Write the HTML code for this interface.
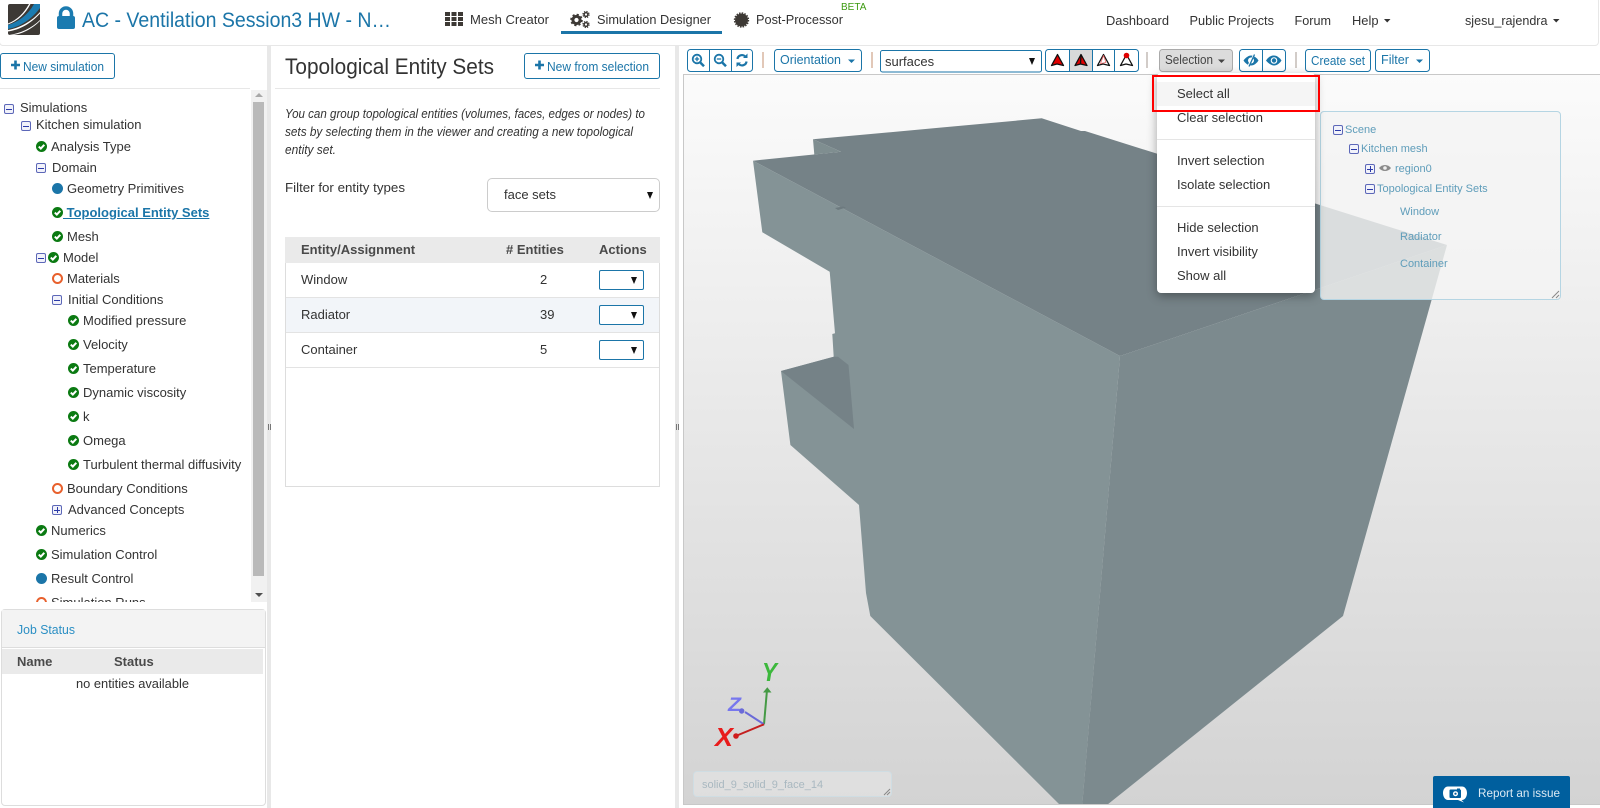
<!DOCTYPE html>
<html lang="en"><head><meta charset="utf-8"><title>Topological Entity Sets</title>
<style>
html,body{margin:0;padding:0;background:#fff;width:1600px;height:808px;overflow:hidden}
body{position:relative;font:13px/16px "Liberation Sans",sans-serif;color:#333}
.a,.t,.m,.p,.b{position:absolute}
.t{white-space:nowrap}
.m,.p{width:8px;height:8px;border:1px solid #5c67b8;border-radius:2px;background:#f1f2fa}
.m:after,.p:after{content:"";position:absolute;left:1px;top:3.500px;width:6px;height:1px;background:#2b3aa8}
.p:before{content:"";position:absolute;left:3.500px;top:1px;width:1px;height:6px;background:#2b3aa8}
.b{box-sizing:border-box;border:1px solid #1b75a8;border-radius:3px;background:#fff}
.sel{position:absolute;box-sizing:border-box;width:45px;height:20px;left:599px;border:1px solid #1b75a8;border-radius:2px;background:#fff}
.arr{position:absolute;width:0;height:0;border-left:3.500px solid transparent;border-right:3.500px solid transparent;border-top:7px solid #111}
.dr{position:absolute;left:1177px;color:#333;white-space:nowrap}
.sp{position:absolute;left:1157px;width:158px;height:1px;background:#e5e5e5}
.sc{position:absolute;color:#5f9dba;font-size:11px;line-height:14px;white-space:nowrap}
</style></head><body>
<svg width="0" height="0" style="position:absolute"><defs>
<g id="ck"><circle cx="5.500" cy="5.500" r="5.500" fill="#0b7a12"/><path d="M2.800 5.600 4.800 7.600 8.300 3.800" fill="none" stroke="#fff" stroke-width="2"/></g>
</defs></svg>

<!-- header -->
<div class="a" style="left:-1px;top:-3px;width:1600px;height:49px;box-sizing:border-box;border:1px solid #e7e7e7;border-radius:4px"></div>
<svg class="a" style="left:0;top:0" width="100" height="45">
<rect x="8" y="4" width="32" height="31" rx="2" fill="#3d3935"/>
<path d="M8 25C18 22 28 15 34 4H40V8C32 19 20 27 8 29Z" fill="#1b7bb0"/>
<path d="M8 30C20 28 32 21 40 12V13.500C32 22.500 20 30 8 31.500Z" fill="#fff"/>
<path d="M9 35C20 33.500 32 28 40 20V21C33 28 22 34.500 12 35Z" fill="#fff"/>
<path d="M8 23.500C17 20 24 13 29 4H30.500C25.500 13.500 18 21 8 24.500Z" fill="#fff"/>
<path d="M60.500 17V13.500a5.500 5.500 0 0 1 11 0V17" fill="none" stroke="#1b7bb0" stroke-width="3.500"/>
<rect x="57" y="16" width="18" height="13" rx="2" fill="#1b7bb0"/>
</svg>
<svg class="a" style="left:440px;top:5px" width="320" height="30">
<g fill="#3d3935"><rect x="5" y="7" width="5" height="4"/><rect x="11.500" y="7" width="5" height="4"/><rect x="18" y="7" width="5" height="4"/><rect x="5" y="12" width="5" height="4"/><rect x="11.500" y="12" width="5" height="4"/><rect x="18" y="12" width="5" height="4"/><rect x="5" y="17" width="5" height="4"/><rect x="11.500" y="17" width="5" height="4"/><rect x="18" y="17" width="5" height="4"/></g>
<g fill="none" stroke="#3d3935"><circle cx="136.500" cy="15" r="3.600" stroke-width="3"/><circle cx="136.500" cy="15" r="5.400" stroke-width="1.800" stroke-dasharray="2.100 2.140"/><circle cx="146" cy="9.500" r="1.900" stroke-width="1.500"/><circle cx="146" cy="9.500" r="3.100" stroke-width="1.100" stroke-dasharray="1.300 1.130"/><circle cx="146" cy="19.500" r="1.900" stroke-width="1.500"/><circle cx="146" cy="19.500" r="3.100" stroke-width="1.100" stroke-dasharray="1.300 1.130"/></g>
<circle cx="301.500" cy="15" r="6.500" fill="#3d3935"/><circle cx="301.500" cy="15" r="7" fill="none" stroke="#3d3935" stroke-width="1.400" stroke-dasharray="1.500 1.250"/>
</svg>
<div class="a" style="left:561px;top:31px;width:161px;height:3px;background:#1b75a8"></div>
<div class="t" style="left:841px;top:2px;font-size:10px;line-height:12px;color:#3c9a10;width:22px">BETA</div>

<!-- panels -->
<div class="a" style="left:0;top:88px;width:250px;height:1px;background:#e7e7e7"></div>
<div class="a" style="left:267px;top:46px;width:4px;height:762px;background:#e8e8e8"></div>
<div class="a" style="left:275px;top:88px;width:385px;height:1px;background:#e7e7e7"></div>
<div class="a" style="left:675px;top:46px;width:4px;height:762px;background:#e8e8e8"></div>
<div class="a" style="left:268px;top:424px;width:1px;height:6px;background:#777"></div><div class="a" style="left:270px;top:424px;width:1px;height:6px;background:#777"></div>
<div class="a" style="left:676px;top:424px;width:1px;height:6px;background:#777"></div><div class="a" style="left:678px;top:424px;width:1px;height:6px;background:#777"></div>

<div class="b" style="left:0;top:53px;width:115px;height:26px"></div>
<div class="b" style="left:524px;top:53px;width:136px;height:26px"></div>

<!-- tree -->
<div class="a" style="left:0;top:90px;width:251px;height:512px;overflow:hidden">
<i class="m" style="left:4px;top:14px"></i><div class="t" style="left:20px;top:10px">Simulations</div>
<i class="m" style="left:21px;top:31px"></i><div class="t" style="left:36px;top:27px">Kitchen simulation</div>
<svg class="a" style="left:36px;top:51px" width="11" height="11"><use href="#ck"/></svg><div class="t" style="left:51px;top:49px">Analysis Type</div>
<i class="m" style="left:36px;top:73px"></i><div class="t" style="left:52px;top:70px">Domain</div>
<div class="a" style="left:52px;top:93px;width:11px;height:11px;border-radius:50%;background:#1b75a8"></div><div class="t" style="left:67px;top:91px">Geometry Primitives</div>
<svg class="a" style="left:52px;top:117px" width="11" height="11"><use href="#ck"/></svg><div class="t" style="left:63px;top:115px;font-weight:bold;color:#1b75a8;text-decoration:underline">&nbsp;Topological Entity Sets</div>
<svg class="a" style="left:52px;top:141px" width="11" height="11"><use href="#ck"/></svg><div class="t" style="left:67px;top:139px">Mesh</div>
<i class="m" style="left:36px;top:163px"></i><svg class="a" style="left:48px;top:162px" width="11" height="11"><use href="#ck"/></svg><div class="t" style="left:63px;top:160px">Model</div>
<div class="a" style="left:52px;top:183px;width:7px;height:7px;border-radius:50%;border:2px solid #e8602c"></div><div class="t" style="left:67px;top:181px">Materials</div>
<i class="m" style="left:52px;top:205px"></i><div class="t" style="left:68px;top:202px">Initial Conditions</div>
<svg class="a" style="left:68px;top:225px" width="11" height="11"><use href="#ck"/></svg><div class="t" style="left:83px;top:223px">Modified pressure</div>
<svg class="a" style="left:68px;top:249px" width="11" height="11"><use href="#ck"/></svg><div class="t" style="left:83px;top:247px">Velocity</div>
<svg class="a" style="left:68px;top:273px" width="11" height="11"><use href="#ck"/></svg><div class="t" style="left:83px;top:271px">Temperature</div>
<svg class="a" style="left:68px;top:297px" width="11" height="11"><use href="#ck"/></svg><div class="t" style="left:83px;top:295px">Dynamic viscosity</div>
<svg class="a" style="left:68px;top:321px" width="11" height="11"><use href="#ck"/></svg><div class="t" style="left:83px;top:319px">k</div>
<svg class="a" style="left:68px;top:345px" width="11" height="11"><use href="#ck"/></svg><div class="t" style="left:83px;top:343px">Omega</div>
<svg class="a" style="left:68px;top:369px" width="11" height="11"><use href="#ck"/></svg><div class="t" style="left:83px;top:367px">Turbulent thermal diffusivity</div>
<div class="a" style="left:52px;top:393px;width:7px;height:7px;border-radius:50%;border:2px solid #e8602c"></div><div class="t" style="left:67px;top:391px">Boundary Conditions</div>
<i class="p" style="left:52px;top:415px"></i><div class="t" style="left:68px;top:412px">Advanced Concepts</div>
<svg class="a" style="left:36px;top:435px" width="11" height="11"><use href="#ck"/></svg><div class="t" style="left:51px;top:433px">Numerics</div>
<svg class="a" style="left:36px;top:459px" width="11" height="11"><use href="#ck"/></svg><div class="t" style="left:51px;top:457px">Simulation Control</div>
<div class="a" style="left:36px;top:483px;width:11px;height:11px;border-radius:50%;background:#1b75a8"></div><div class="t" style="left:51px;top:481px">Result Control</div>
<div class="a" style="left:36px;top:507px;width:7px;height:7px;border-radius:50%;border:2px solid #e8602c"></div><div class="t" style="left:51px;top:505px">Simulation Runs</div>
</div>
<!-- scrollbar -->
<div class="a" style="left:251px;top:90px;width:16px;height:512px;background:#f1f1f1"></div>
<div class="a" style="left:253px;top:102px;width:11px;height:474px;background:#b9b9b9"></div>
<div class="a" style="left:255px;top:93px;width:0;height:0;border-left:4px solid transparent;border-right:4px solid transparent;border-bottom:4px solid #a8a8a8"></div>
<div class="a" style="left:255px;top:593px;width:0;height:0;border-left:4px solid transparent;border-right:4px solid transparent;border-top:4px solid #505050"></div>

<!-- job status -->
<div class="a" style="left:1px;top:609px;width:265px;height:197px;box-sizing:border-box;border:1px solid #ddd;border-radius:4px;background:#fff"></div>
<div class="a" style="left:2px;top:610px;width:263px;height:38px;background:#f3f3f3;border-bottom:1px solid #ddd;box-sizing:border-box"></div>
<div class="a" style="left:2px;top:649px;width:261px;height:25px;background:#eaeaea"></div>
<div class="t" style="left:17px;top:654px;font-weight:bold;color:#4a4a4a">Name</div>
<div class="t" style="left:114px;top:654px;font-weight:bold;color:#4a4a4a">Status</div>

<!-- table -->
<div class="a" style="left:285px;top:237px;width:375px;height:250px;box-sizing:border-box;border:1px solid #ddd;border-top:0"></div>
<div class="a" style="left:285px;top:237px;width:375px;height:26px;background:#eaeaea"></div>
<div class="a" style="left:286px;top:297px;width:373px;height:35px;background:#f2f5f9"></div>
<div class="a" style="left:286px;top:297px;width:373px;height:1px;background:#e3e3e3"></div>
<div class="a" style="left:286px;top:332px;width:373px;height:1px;background:#e3e3e3"></div>
<div class="a" style="left:286px;top:367px;width:373px;height:1px;background:#e3e3e3"></div>
<div class="t" style="left:301px;top:242px;font-weight:bold;color:#4a4a4a">Entity/Assignment</div>
<div class="t" style="left:506px;top:242px;font-weight:bold;color:#4a4a4a"># Entities</div>
<div class="t" style="left:599px;top:242px;font-weight:bold;color:#4a4a4a">Actions</div>
<div class="t" style="left:301px;top:272px">Window</div><div class="t" style="left:540px;top:272px">2</div>
<div class="t" style="left:301px;top:307px">Radiator</div><div class="t" style="left:540px;top:307px">39</div>
<div class="t" style="left:301px;top:342px">Container</div><div class="t" style="left:540px;top:342px">5</div>
<div class="sel" style="top:270px"><i class="arr" style="left:31px;top:6px"></i></div>
<div class="sel" style="top:305px"><i class="arr" style="left:31px;top:6px"></i></div>
<div class="sel" style="top:340px"><i class="arr" style="left:31px;top:6px"></i></div>
<div class="a" style="left:487px;top:178px;width:173px;height:34px;box-sizing:border-box;border:1px solid #ccc;border-radius:5px;background:#fff"></div>
<div class="t" style="left:504px;top:187px">face sets</div>
<i class="arr" style="left:647px;top:192px"></i>

<!-- viewer -->
<svg class="a" style="left:683px;top:74px" width="917" height="731" viewBox="683 74 917 731">
<defs><linearGradient id="bg" x1="0" y1="0" x2="0" y2="1"><stop offset="0" stop-color="#fbfbfb"/><stop offset="1" stop-color="#d3d3d3"/></linearGradient></defs>
<rect x="683.500" y="74.500" width="917" height="730" fill="url(#bg)" stroke="#c8c8c8"/>
<path d="M753 160.700 841 151.700 813 139.300 1041.700 118.300 1081 131 1085 131 1447 245 1120 356Z" fill="#758287"/>
<path d="M813 139.300 814.300 154.500 841 151.700Z" fill="#7f8e90"/>
<path d="M753 160.700 762.300 232.300 829.700 271.700 835 333.300 832.300 334 833.700 356.700 781 371 790.400 445 859 505 866 593 870.300 616 1059 804 1082.300 804 1120 356Z" fill="#849396"/>
<path d="M1120 356 1447 245 1343 616 1108.200 804 1082.300 804Z" fill="#7c8a8e"/>
<path d="M781 371 833.700 356.700 838 356.700 848.500 365 854 429Z" fill="#758287"/>
<path d="M835 208 843 206.500 846 207.500 838 210Z" fill="#6d7a7f"/>
<g fill="none" stroke-width="2">
<path d="M764 724.300 767 690" stroke="#459a45"/><path d="M764 724.300 745 712" stroke="#6a6ad8"/><path d="M764 724.300 737 735.500" stroke="#c42020"/></g>
<path d="M767.300 687.300 763 692.500H771.500Z" fill="#459a45"/><circle cx="741.700" cy="711" r="2.700" fill="#6a6ad8"/><circle cx="736" cy="736" r="2.800" fill="#d01c1c"/>
<text x="762" y="681" font-family="Liberation Sans" font-style="italic" font-weight="bold" font-size="26" fill="#3cb83c" textLength="15" lengthAdjust="spacingAndGlyphs">Y</text>
<text x="728" y="711" font-family="Liberation Sans" font-style="italic" font-weight="bold" font-size="19" fill="#7777ee" textLength="13" lengthAdjust="spacingAndGlyphs">Z</text>
<text x="715" y="746" font-family="Liberation Sans" font-style="italic" font-weight="bold" font-size="26" fill="#e81c1c" textLength="18" lengthAdjust="spacingAndGlyphs">X</text>
</svg>

<!-- toolbar -->
<svg class="a" style="left:680px;top:46px" width="760" height="28">
<g fill="#fff" stroke="#1b75a8"><rect x="7.500" y="3.500" width="65" height="22" rx="3"/><path d="M29.500 3.500V25.500M51.500 3.500V25.500" fill="none"/>
<rect x="94.500" y="3.500" width="87" height="22" rx="3"/>
<rect x="200.500" y="4.500" width="161" height="21.500" rx="2"/>
<rect x="365.500" y="3.500" width="93" height="22" rx="3"/>
<rect x="559.500" y="3.500" width="46" height="22" rx="3"/>
<rect x="625.500" y="3.500" width="65" height="22" rx="3"/>
<rect x="695.500" y="3.500" width="54" height="22" rx="3"/></g>
<rect x="390" y="4" width="22" height="21" fill="#d9d9d9"/>
<rect x="479.500" y="3.500" width="73" height="22" rx="3" fill="#dcdcdc" stroke="#aaa"/>
<path d="M389.500 3.500V25.500M412.500 3.500V25.500M434.500 3.500V25.500M582.500 3.500V25.500" stroke="#1b75a8" fill="none"/>
<g stroke="#d8b5a0" stroke-width="1.500"><path d="M83 6V22M192 6V22"/></g><g stroke="#c4bcb6" stroke-width="1.500"><path d="M467 6V22M616 6V22"/></g>
<g fill="none" stroke="#1b75a8" stroke-width="1.800"><circle cx="17" cy="13" r="4.300"/><path d="M20 16.300 24 20.300" stroke-width="2.500"/><path d="M14.800 13H19.200M17 10.800V15.200" stroke-width="1.300"/><circle cx="39" cy="13" r="4.300"/><path d="M42 16.300 46 20.300" stroke-width="2.500"/><path d="M36.800 13H41.200" stroke-width="1.300"/>
<path d="M57.500 13a4.500 4.200 0 0 1 7.500-2.800M66.500 15.500a4.500 4.200 0 0 1-7.500 2.800" stroke-width="2.200"/></g>
<path d="M63 12H67.500V7.500ZM61 16.500H56.500V21Z" fill="#1b75a8"/>
<path d="M168 13.500H175L171.500 17ZM736 13.500H743L739.500 17Z" fill="#1b75a8"/><path d="M538 13.500H545L541.500 17Z" fill="#444"/>
<!-- render-mode icons -->
<g stroke="#111" stroke-width="1.300" stroke-linejoin="round">
<path d="M377.500 8.500 371.500 19.500 377 18 383.500 19.500Z" fill="#e00000"/>
<path d="M401 8.500 395 19.500 400.500 18 407 19.500Z" fill="#e00000"/><path d="M401 8.500 400.500 18" fill="none"/>
<path d="M423.500 8.500 417.500 19.500 423 18 429.500 19.500Z" fill="#fff"/><path d="M423.500 9.500 420.500 17.500 426 16.500Z" fill="none" stroke="#e66" stroke-width=".8"/>
<path d="M446.500 8.500 440.500 19.500 446 18 452.500 19.500Z" fill="#fff"/></g><circle cx="446.500" cy="9.500" r="2.800" fill="#e00000"/>
<!-- eyes -->
<g fill="#1b75a8"><path d="M563.500 14.500C566 11 569 9.500 571 9.500 574 9.500 577 12 578.500 14.500 577 17 574 19.500 571 19.500 568 19.500 565 17 563.500 14.500Z"/><path d="M586 14.500C589 10 592 9.500 594 9.500 597 9.500 600 12 601.500 14.500 600 17 597 19.500 594 19.500 591 19.500 588 17 586 14.500Z"/></g>
<circle cx="571" cy="14.500" r="3" fill="#fff"/><path d="M574 9 568 21" stroke="#fff" stroke-width="2"/><path d="M574.500 8.500 569 20.500" stroke="#1b75a8" stroke-width="1.300"/>
<circle cx="594" cy="14.500" r="3.300" fill="#fff"/><circle cx="594" cy="14.500" r="2.200" fill="#1b75a8"/>
</svg>
<div class="t" style="left:885px;top:54px">surfaces</div>
<i class="arr" style="left:1029px;top:58px"></i>

<!-- scene panel -->
<div class="a" style="left:1320px;top:111px;width:241px;height:189px;box-sizing:border-box;border:1px solid #b5d5e3;border-radius:4px;background:rgba(244,244,244,.8)"></div>
<i class="m" style="left:1333px;top:125px"></i><div class="sc" style="left:1345px;top:123px">Scene</div>
<i class="m" style="left:1349px;top:144px"></i><div class="sc" style="left:1361px;top:142px">Kitchen mesh</div>
<i class="p" style="left:1365px;top:164px"></i><div class="sc" style="left:1395px;top:162px">region0</div>
<svg class="a" style="left:1379px;top:163px" width="12" height="10"><path d="M0 5C3 1 9 1 12 5 9 9 3 9 0 5Z" fill="#8a8a8a"/><circle cx="6" cy="5" r="1.800" fill="#eee"/></svg>
<i class="m" style="left:1365px;top:184px"></i><div class="sc" style="left:1377px;top:182px">Topological Entity Sets</div>
<div class="sc" style="left:1400px;top:205px">Window</div>
<div class="sc" style="left:1400px;top:230px">Radiator</div>
<div class="sc" style="left:1400px;top:257px">Container</div>
<svg class="a" style="left:1550px;top:289px" width="10" height="10"><path d="M9 2 2 9M9 6 6 9" stroke="#888" fill="none"/></svg>

<!-- bottom-left text box -->
<div class="a" style="left:693px;top:771px;width:199px;height:26px;box-sizing:border-box;border:1px solid #cfdde3;border-radius:4px;background:rgba(255,255,255,.25)"></div>
<div class="t" style="left:702px;top:777px;font-size:11px;color:#a9b8c0">solid_9_solid_9_face_14</div>
<svg class="a" style="left:883px;top:788px" width="8" height="8"><path d="M7 1 1 7M7 4 4 7" stroke="#888" fill="none"/></svg>

<!-- dropdown -->
<div class="a" style="left:1157px;top:73px;width:158px;height:220px;background:#fff;border-radius:4px;box-shadow:0 3px 10px rgba(0,0,0,.35)"></div>
<div class="a" style="left:1157px;top:82px;width:158px;height:24px;background:#f5f5f5"></div>
<div class="dr" style="top:86px">Select all</div>
<div class="dr" style="top:110px">Clear selection</div>
<div class="sp" style="top:139px"></div>
<div class="dr" style="top:153px">Invert selection</div>
<div class="dr" style="top:177px">Isolate selection</div>
<div class="sp" style="top:206px"></div>
<div class="dr" style="top:220px">Hide selection</div>
<div class="dr" style="top:244px">Invert visibility</div>
<div class="dr" style="top:268px">Show all</div>
<div class="a" style="left:1152px;top:75px;width:168px;height:37px;box-sizing:border-box;border:2.500px solid #f00"></div>

<!-- report button -->
<div class="a" style="left:1433px;top:776px;width:137px;height:32px;background:#005f9e;border-radius:2px 2px 0 0"></div>
<svg class="a" style="left:1443px;top:785px" width="25" height="18"><path d="M5 1.500H19C22 1.500 24 4.500 24 8 24 11.500 22 15 19 15H18.500L21 17.500 15 15H5C2 15 0 11.500 0 8 0 4.500 2 1.500 5 1.500Z" fill="#fff"/><rect x="6.500" y="4.500" width="11.500" height="8.500" rx="1" fill="#005f9e"/><circle cx="12.500" cy="8.700" r="2.500" fill="#fff"/><circle cx="12.500" cy="8.700" r="1.100" fill="#005f9e"/><rect x="14" y="3.500" width="3" height="2" fill="#005f9e"/></svg>

<!-- text overlay -->
<svg class="a" style="left:0;top:0;pointer-events:none" width="1600" height="808" font-family="Liberation Sans, sans-serif" font-size="13">
<g fill="#1b75a8">
<text x="82" y="27" font-size="21" textLength="309" lengthAdjust="spacingAndGlyphs">AC - Ventilation Session3 HW - N…</text>
<text x="23" y="71" textLength="81" lengthAdjust="spacingAndGlyphs">New simulation</text>
<text x="547" y="71" textLength="102" lengthAdjust="spacingAndGlyphs">New from selection</text>
<text x="780" y="64" textLength="61" lengthAdjust="spacingAndGlyphs">Orientation</text>
<text x="1311" y="65" textLength="54" lengthAdjust="spacingAndGlyphs">Create set</text>
<text x="1381" y="64" textLength="28" lengthAdjust="spacingAndGlyphs">Filter</text>
<path d="M11 65H20M15.500 60.500V69.500M535 65H544M539.500 60.500V69.500" stroke="#1b75a8" stroke-width="2.600" fill="none"/>
</g>
<text x="17" y="634" fill="#2b8fc4" textLength="58" lengthAdjust="spacingAndGlyphs">Job Status</text>
<g fill="#333">
<text x="470" y="24" textLength="79" lengthAdjust="spacingAndGlyphs">Mesh Creator</text>
<text x="597" y="24" textLength="114" lengthAdjust="spacingAndGlyphs">Simulation Designer</text>
<text x="756" y="24" textLength="87" lengthAdjust="spacingAndGlyphs">Post-Processor</text>
<text x="1106" y="25" textLength="63" lengthAdjust="spacingAndGlyphs">Dashboard</text>
<text x="1189.500" y="25" textLength="84.500" lengthAdjust="spacingAndGlyphs">Public Projects</text>
<text x="1294.500" y="25" textLength="36.500" lengthAdjust="spacingAndGlyphs">Forum</text>
<text x="1352" y="25" textLength="26.500" lengthAdjust="spacingAndGlyphs">Help</text>
<text x="1465" y="25" textLength="82.500" lengthAdjust="spacingAndGlyphs">sjesu_rajendra</text>
<path d="M1384 19H1390.500L1387.200 22.500ZM1553 19H1559.500L1556.200 22.500Z"/>
<text x="285" y="74" font-size="22" textLength="209" lengthAdjust="spacingAndGlyphs">Topological Entity Sets</text>
<g font-style="italic">
<text x="285" y="118" textLength="360" lengthAdjust="spacingAndGlyphs">You can group topological entities (volumes, faces, edges or nodes) to</text>
<text x="285" y="136" textLength="348" lengthAdjust="spacingAndGlyphs">sets by selecting them in the viewer and creating a new topological</text>
<text x="285" y="154" textLength="51" lengthAdjust="spacingAndGlyphs">entity set.</text>
</g>
<text x="285" y="192" textLength="120" lengthAdjust="spacingAndGlyphs">Filter for entity types</text>
<text x="76" y="688" textLength="113" lengthAdjust="spacingAndGlyphs">no entities available</text>
</g>
<text x="1165" y="64" fill="#444" textLength="48" lengthAdjust="spacingAndGlyphs">Selection</text>
<text x="1478" y="797" fill="#dceaf4" font-size="12" textLength="82" lengthAdjust="spacingAndGlyphs">Report an issue</text>
</svg>
</body></html>
